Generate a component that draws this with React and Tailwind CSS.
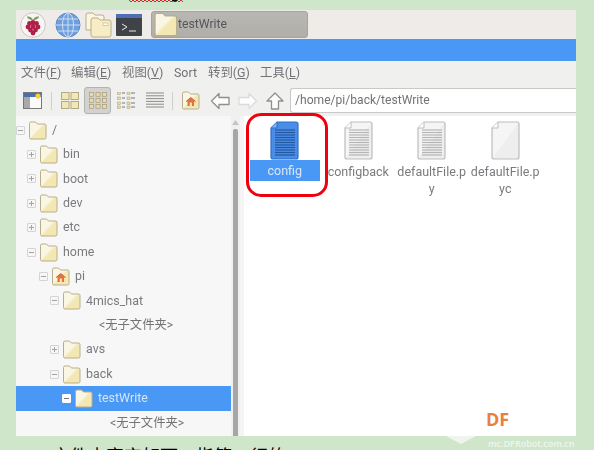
import React, { useId } from "react";

// Cream folder used in the tree and the taskbar
const Folder = ({ size = 19, home = false }) => {
  const id = useId();
  return (
    <svg width={size} height={size} viewBox="0 0 19 19" className="shrink-0">
      <defs>
        <linearGradient id={id} x1="0" y1="0" x2="1" y2="1">
          <stop offset="0.45" stopColor="#faf6e4" />
          <stop offset="0.55" stopColor="#f3e7b4" />
        </linearGradient>
      </defs>
      <path
        d="M1.5 2.5 Q1.5 1 3 1 H7.5 L9.5 3 H16.5 Q18 3 18 4.5 V16.5 Q18 18 16.5 18 H3 Q1.5 18 1.5 16.5 Z"
        fill={`url(#${id})`}
        stroke="#b8ad8c"
      />
      {home && (
        <>
          <path d="M5 10.5 L9.8 6.5 L14.5 10.5" fill="#e0743f" stroke="#d8642f" />
          <rect x="6.5" y="10" width="6.5" height="5" fill="#e0743f" />
          <rect x="8.8" y="11.5" width="2" height="3.5" fill="#f7eec8" />
        </>
      )}
    </svg>
  );
};

const Toggle = ({ open, active }) => (
  <span
    className={`w-[9px] h-[9px] -ml-[1px] shrink-0 rounded-[1px] border flex items-center justify-center ${
      active ? "bg-white border-white" : "border-[#d4d4d4] bg-[#f6f6f6]"
    }`}
  >
    <svg width="7" height="7" viewBox="0 0 7 7">
      <path d="M1 3.5H6" stroke={active ? "#777" : "#a3a3a3"} strokeWidth="1" />
      {!open && <path d="M3.5 1V6" stroke="#a3a3a3" strokeWidth="1" />}
    </svg>
  </span>
);

const treeRows = [
  { label: "/", level: 0, open: true },
  { label: "bin", level: 1 },
  { label: "boot", level: 1 },
  { label: "dev", level: 1 },
  { label: "etc", level: 1 },
  { label: "home", level: 1, open: true },
  { label: "pi", level: 2, open: true, home: true },
  { label: "4mics_hat", level: 3, open: true },
  { empty: true, pad: "pl-[83px]" },
  { label: "avs", level: 3 },
  { label: "back", level: 3, open: true },
  { label: "testWrite", level: 4, open: true, active: true },
  { empty: true, pad: "pl-[94px]" },
];

const levelPads = ["pl-[1px]", "pl-[12px]", "pl-[24px]", "pl-[35px]", "pl-[47px]"];

const TreeRow = ({ row }) => {
  if (row.empty) {
    return (
      <div className={`h-[24.4px] flex items-center text-[12.3px] text-[#737373] ${row.pad}`}>
        &lt;无子文件夹&gt;
      </div>
    );
  }
  return (
    <div
      className={`h-[24.4px] flex items-center ${levelPads[row.level]} ${
        row.active ? "bg-[#4a98f5] text-[#d3e4f8]" : "text-[#7a7b7f]"
      }`}
    >
      <Toggle open={row.open} active={row.active} />
      <span className="ml-[3px]">
        <Folder home={row.home} />
      </span>
      <span className="ml-[5px] text-[12.4px]">{row.label}</span>
    </div>
  );
};

// Document icon, the lines are dropped for the compiled .pyc file
const Doc = ({ lines = true, selected = false }) => {
  const id = useId();
  const stroke = selected ? "#2f6fc4" : "#bdbdbd";
  const fill = selected ? "#4a8de8" : "#f5f5f5";
  const line = selected ? "#23589f" : "#b5b5b5";
  return (
    <svg width="29" height="39" viewBox="0 0 29 39">
      <defs>
        <linearGradient id={id} x1="0" y1="0" x2="1" y2="1">
          <stop offset="0.5" stopColor={fill} />
          <stop offset="0.5" stopColor={selected ? "#4a8de8" : "#eeeeee"} />
        </linearGradient>
      </defs>
      <path
        d="M7 1 H26 Q28 1 28 3 V36 Q28 38 26 38 H3 Q1 38 1 36 V7 Z"
        fill={`url(#${id})`}
        stroke={stroke}
        strokeWidth="1.2"
      />
      <path d="M7 1 V7 H1" fill={selected ? "#7fb0f0" : "#fff"} stroke={stroke} />
      {lines &&
        [9, 11.5, 14, 16.5, 19, 21.5, 24, 26.5, 29, 31.5, 34].map((y) => (
          <path key={y} d={`M5 ${y} H25`} stroke={line} strokeWidth="1.2" />
        ))}
    </svg>
  );
};

const FileItem = ({ name, lines, selected }) => (
  <div className="w-[73.5px] shrink-0 flex flex-col items-center">
    <Doc lines={lines} selected={selected} />
    <div
      className={`w-[70px] text-center text-[12.5px] leading-[17px] break-all ${
        selected ? "bg-[#4a98f5] text-[#d6e6fb] h-[21px] flex items-center justify-center" : "text-[#7a7b7f] pt-[3px]"
      }`}
    >
      {name}
    </div>
  </div>
);

const MenuItem = ({ label, hot, className }) => (
  <span className={className}>
    {label}
    {hot && (
      <>
        (<span className="underline underline-offset-1">{hot}</span>)
      </>
    )}
  </span>
);

const Raspberry = () => (
  <svg width="26" height="26" viewBox="0 0 26 26">
    <circle cx="13" cy="13" r="12.3" fill="#f6f5f3" stroke="#c9c8c5" />
    <path d="M13 8 C9 8 7 6 7 4.5 C10 4 12 5.5 13 8 C14 5.5 16 4 19 4.5 C19 6 17 8 13 8Z" fill="#7aa35a" />
    {[[13, 10.5], [9.5, 11.5], [16.5, 11.5], [8, 15], [13, 14.5], [18, 15], [10.5, 18], [15.5, 18], [13, 21]].map(([x, y]) => (
      <circle key={`${x}-${y}`} cx={x} cy={y} r="2.4" fill="#b01f48" />
    ))}
  </svg>
);

const Globe = () => (
  <svg width="26" height="26" viewBox="0 0 26 26">
    <circle cx="13" cy="13" r="12" fill="#6f9fdc" stroke="#5a8bc8" />
    <g fill="none" stroke="#d7e5f6" strokeWidth="0.9">
      <ellipse cx="13" cy="13" rx="5.5" ry="12" />
      <path d="M13 1V25M1 13H25M3 7H23M3 19H23" />
    </g>
  </svg>
);

const Folders = () => (
  <svg width="27" height="26" viewBox="0 0 27 26">
    <path d="M1 3 Q1 1 3 1H8L10 3H17Q19 3 19 5V18H1Z" fill="#fbf6df" stroke="#b8ad8c" />
    <path d="M6 8 Q6 6 8 6H13L15 8H24Q26 8 26 10V23Q26 25 24 25H8Q6 25 6 23Z" fill="#f6edc4" stroke="#b8ad8c" />
    <rect x="18" y="11" width="5" height="2.5" fill="#fff" stroke="#b8ad8c" strokeWidth="0.6" />
  </svg>
);

const Terminal = () => (
  <svg width="26" height="22" viewBox="0 0 26 22">
    <rect width="26" height="22" rx="1" fill="#3f4347" />
    <rect width="26" height="4" fill="#4f6fb5" />
    <path d="M6 10L11 13L6 16M13 17H20" fill="none" stroke="#e6e6e6" strokeWidth="1" />
  </svg>
);

const NewWindow = () => (
  <svg width="20" height="17" viewBox="0 0 20 17">
    <rect x="0.5" y="0.5" width="18" height="16" fill="#fafafa" stroke="#777" />
    <rect x="1" y="1" width="17" height="4" fill="#4a6fb0" />
    <rect x="1" y="5" width="6" height="11" fill="#a9a9a9" />
    <circle cx="15" cy="4" r="2.6" fill="#f3d23c" />
  </svg>
);

const IconsView = () => (
  <svg width="18" height="17" viewBox="0 0 18 17" fill="#f3e7b4" stroke="#b3a987">
    <rect x="0.5" y="0.5" width="7.5" height="7" />
    <rect x="10" y="0.5" width="7.5" height="7" />
    <rect x="0.5" y="9.5" width="7.5" height="7" />
    <rect x="10" y="9.5" width="7.5" height="7" />
  </svg>
);

const CompactView = () => (
  <svg width="18" height="17" viewBox="0 0 18 17" fill="#e8dca8" stroke="#a59c7c" strokeWidth="0.7">
    {[0.5, 6.5, 12.5].map((y) =>
      [0.5, 7, 13.5].map((x) => <rect key={`${x}-${y}`} x={x} y={y} width="4" height="3.8" />)
    )}
  </svg>
);

const DetailView = () => (
  <svg width="18" height="17" viewBox="0 0 18 17">
    {[1, 6, 11, 15].map((y) => (
      <g key={y}>
        <rect x="0.5" y={y - 1} width="3" height="2.5" fill="#e8dca8" stroke="#a59c7c" strokeWidth="0.5" />
        <path d={`M5 ${y}H8`} stroke="#777" />
        <rect x="10" y={y - 1} width="3" height="2.5" fill="#e8dca8" stroke="#a59c7c" strokeWidth="0.5" />
        <path d={`M14 ${y}H18`} stroke="#777" />
      </g>
    ))}
  </svg>
);

const ListView = () => (
  <svg width="18" height="17" viewBox="0 0 18 17" stroke="#8a8a8a">
    {[1, 3.8, 6.6, 9.4, 12.2, 15].map((y) => (
      <path key={y} d={`M0 ${y}H18`} />
    ))}
  </svg>
);

const Arrow = ({ d, faded, w = 20 }) => (
  <svg width={w} height="18" viewBox={`0 0 ${w} 18`}>
    <path d={d} fill="#fdfdfd" stroke={faded ? "#dcdcdc" : "#8f8f8f"} strokeWidth="1.3" strokeLinejoin="round" />
  </svg>
);

const Separator = () => <span className="block w-px h-[18px] bg-[#cfcfcf] shrink-0" />;

const App = () => {
  return (
    <div className="relative w-[594px] h-[450px] overflow-hidden bg-[#cfe6cb] font-['Roboto','Noto_Sans_CJK_SC',sans-serif]">
      {/* spell check squiggle left over from the editor */}
      <svg width="60" height="3" viewBox="0 0 60 3" className="block ml-[129px] -mb-[3px]">
        <path
          d="M0 0 L2 2 L4 0 L6 2 L8 0 L10 2 L12 0 L14 2 L16 0 L18 2 L20 0 L22 2 L24 0 L26 2 L28 0 L30 2 L32 0 L34 2 L36 0 L38 2 L40 0 L42 2 L44 0 L46 2 L48 0 L50 2 L52 0 L54 2"
          fill="none"
          stroke="#e02020"
        />
        <rect x="43" y="0" width="5" height="1.5" fill="#111" />
      </svg>

      <div className="pt-[10px] pl-[16px]">
        <div className="w-[560px] h-[426px] flex flex-col overflow-hidden blur-[0.5px]">
          {/* taskbar */}
          <div className="h-[29px] shrink-0 bg-[#efebe9] flex items-center">
            <span className="ml-[4px]"><Raspberry /></span>
            <span className="ml-[9px]"><Globe /></span>
            <span className="ml-[4px]"><Folders /></span>
            <span className="ml-[4px]"><Terminal /></span>
            <div className="ml-[9px] w-[157px] h-[27px] rounded-[3px] border border-[#a5a39e] bg-gradient-to-b from-[#b9b7b2] to-[#b0aea8] flex items-center pl-[1px]">
              <Folder size={25} />
              <span className="text-[12.2px] text-[#55565a]">testWrite</span>
            </div>
          </div>

          {/* title bar */}
          <div className="h-[22px] shrink-0 bg-[#4a98f5]" />

          {/* menu */}
          <div className="h-[24px] shrink-0 bg-[#f0f0ef] flex items-center pl-[5px] text-[12.4px] text-[#727377]">
            <MenuItem label="文件" hot="F" className="w-[50px]" />
            <MenuItem label="编辑" hot="E" className="w-[51px]" />
            <MenuItem label="视图" hot="V" className="w-[52px]" />
            <span className="w-[34px]">Sort</span>
            <MenuItem label="转到" hot="G" className="w-[52px]" />
            <MenuItem label="工具" hot="L" />
          </div>

          {/* toolbar */}
          <div className="h-[31px] shrink-0 bg-[#f0f0ef] flex items-center pl-[7px]">
            <NewWindow />
            <span className="ml-[8px]"><Separator /></span>
            <span className="ml-[9px]"><IconsView /></span>
            <div className="ml-[5px] w-[27px] h-[27px] rounded-[3px] border border-[#b3b3b1] bg-[#d2d2d0] flex items-center justify-center">
              <CompactView />
            </div>
            <span className="ml-[6px]"><DetailView /></span>
            <span className="ml-[11px]"><ListView /></span>
            <span className="ml-[8px]"><Separator /></span>
            <span className="ml-[8px]"><Folder home /></span>
            <span className="ml-[10px]">
              <Arrow d="M9 1.5 L1.5 9 L9 16.5 V12.5 H19 V5.5 H9 Z" />
            </span>
            <span className="ml-[8px]">
              <Arrow faded d="M11 1.5 L18.5 9 L11 16.5 V12.5 H1 V5.5 H11 Z" />
            </span>
            <span className="ml-[8px]">
              <Arrow w={18} d="M9 1 L17 9 H12.5 V17 H5.5 V9 H1 Z" />
            </span>
            <div className="ml-[6px] flex-1 h-[25px] bg-white border border-[#c9c9c9] border-r-0 rounded-l-[3px] flex items-center pl-[4px] text-[12.1px] text-[#727377]">
              /home/pi/back/testWrite
            </div>
          </div>

          {/* body */}
          <div className="flex-1 flex min-h-0 bg-white">
            <div className="w-[215px] shrink-0 bg-[#f7f7f7] pt-[2px] overflow-hidden">
              {treeRows.map((row, i) => (
                <TreeRow key={i} row={row} />
              ))}
            </div>
            <div className="w-[9px] shrink-0 bg-[#f0f0f0] flex flex-col items-center">
              <svg width="7" height="5" viewBox="0 0 7 5" className="mt-[4px] mb-[4px]">
                <path d="M3.5 0 L7 5 H0 Z" fill="#c4c4c4" />
              </svg>
              <div className="w-[5px] flex-1 bg-[#a6a6a6] rounded-t-[2px]" />
            </div>
            <div className="w-[4px] shrink-0 bg-[#f5f5f5]" />
            <div className="relative flex-1 flex items-start pl-[4px] pt-[5px]">
              <FileItem name="config" selected />
              <FileItem name="configback" />
              <FileItem name="defaultFile.py" />
              <FileItem name="defaultFile.pyc" lines={false} />
              {/* red annotation round the first file */}
              <div className="absolute left-[2px] top-[-3px] w-[82px] h-[84px] rounded-[15px] border-[3px] border-[#f0000f]" />
            </div>
          </div>
        </div>
      </div>

      {/* caption under the screenshot, cut off by the page edge */}
      <div className="pt-[10px] pl-[52px] text-[18px] leading-[22px] text-black whitespace-nowrap">
        文件内容实如下，指第一行的
      </div>

      {/* site watermark */}
      <div className="absolute left-[486px] top-[406px] text-[18px] font-bold text-[#e8803f] font-['Open_Sans',sans-serif]">
        DF
      </div>
      <div className="absolute left-[488px] top-[437px] text-[9px] font-semibold text-[#eef6ec] font-['Open_Sans',sans-serif]">
        mc.DFRobot.com.cn
      </div>
      <svg width="30" height="8" viewBox="0 0 30 8" className="absolute left-[446px] top-[436px]">
        <path d="M0 0 H30 L15 8 Z" fill="#eef6ec" />
      </svg>
    </div>
  );
};

export default App;
